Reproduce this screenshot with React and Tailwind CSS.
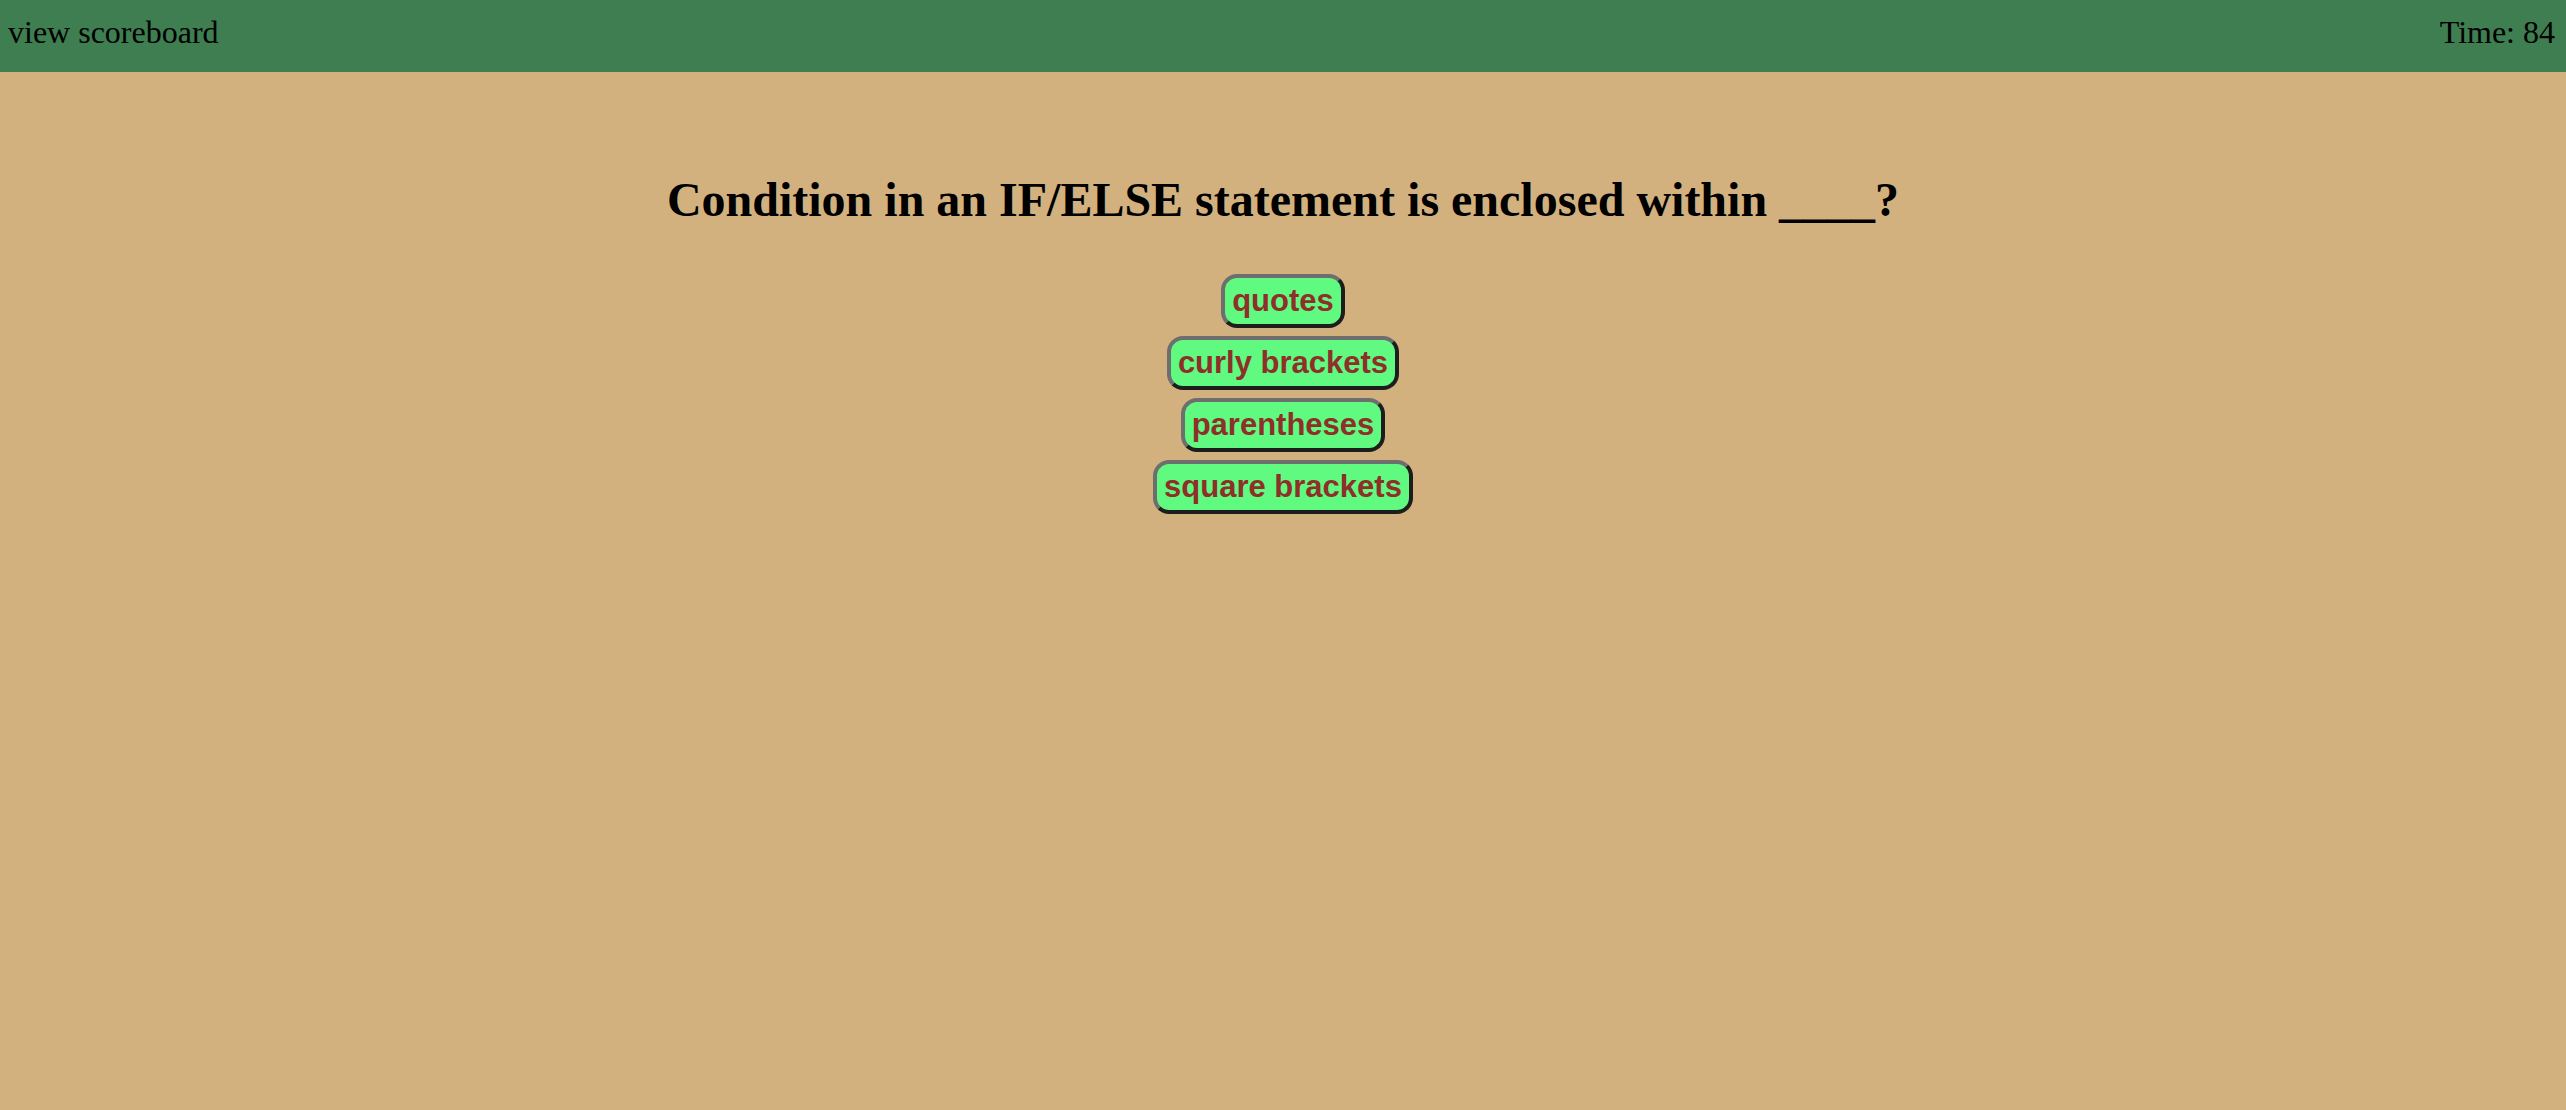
export default function App() {
  const answers = ['quotes', 'curly brackets', 'parentheses', 'square brackets'];

  return (
    <div className="min-h-[1110px] w-full bg-[#d3b17f] font-['Liberation_Serif',serif] text-black">
      {/* header bar */}
      <header className="flex h-[72px] items-start justify-between bg-[#3e7e50] pl-2 pr-[11px] pt-[14px] text-[32px] leading-[37px]">
        <span>view scoreboard</span>
        <span>Time: 84</span>
      </header>

      {/* question */}
      <main className="flex flex-col items-center">
        <h1 className="mt-[100px] text-[48px] font-bold leading-[55px]">
          Condition in an IF/ELSE statement is enclosed within ____?
        </h1>

        <div className="mt-[47px] flex flex-col items-center gap-[8px]">
          {answers.map((a) => (
            <button
              key={a}
              className="rounded-[16px] border-4 border-solid border-t-[#6e6e6e] border-l-[#6e6e6e] border-r-[#1d1d1d] border-b-[#1d1d1d] bg-[#60fa80] px-[7px] py-[5px] font-['Liberation_Sans',sans-serif] text-[31px] font-bold leading-[36px] text-[#8e2f2a]"
            >
              {a}
            </button>
          ))}
        </div>
      </main>
    </div>
  );
}
